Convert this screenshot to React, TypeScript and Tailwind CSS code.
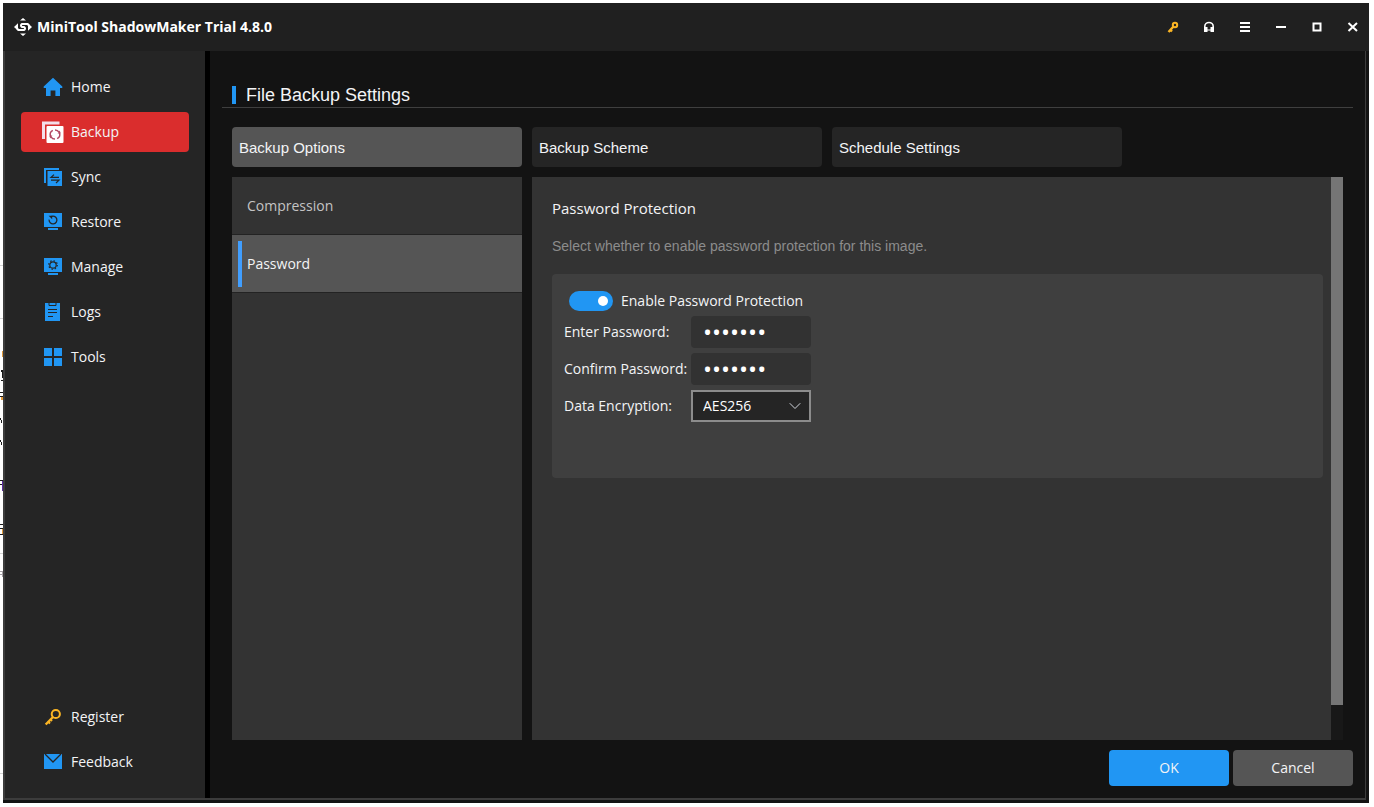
import React, { useState } from 'react';
import { ChevronDown } from 'lucide-react';

type IconName = 'home' | 'backup' | 'sync' | 'restore' | 'manage' | 'logs' | 'tools' | 'register' | 'feedback';

const BLUE = '#2196f3';
const DARK = '#252525';

const NavIcon: React.FC<{ name: IconName }> = ({ name }) => (
  <svg className="h-[22px] w-[22px] shrink-0" viewBox="0 0 22 22" fill="none" aria-hidden="true">
    {name === 'home' && (
      <path d="M11 1.8 1.7 10.6V12H4v8h4.6v-5.6h4.8V20H18v-8h2.3v-1.4z" fill={BLUE} />
    )}
    {name === 'backup' && (
      <>
        <path d="M1.500 18V2h16" stroke="#f3dfea" strokeWidth="3" />
        <rect x="4.5" y="5" width="17" height="17" rx="1" fill="#fff" />
        <path d="M8.600 15.400a4.800 4.800 0 0 1 2.200-6M17.400 11.600a4.800 4.800 0 0 1-2.200 6" stroke="#b34a64" strokeWidth="1.5" />
        <path d="M13 9a4.600 4.600 0 0 1 4 2.200M13 18a4.600 4.600 0 0 1-4-2.200" stroke="#b34a64" strokeWidth="1.5" />
        <path d="m15.600 12.400 3-.200-.800-2.600zM10.400 14.600l-3 .200.800 2.600z" fill="#b34a64" />
      </>
    )}
    {name === 'sync' && (
      <>
        <path d="M3 17V3h14" stroke={BLUE} strokeWidth="2" />
        <rect x="5.5" y="5" width="14.5" height="15" fill={BLUE} />
        <path d="M17 11.4H9l3-2.8M9 14.2h8l-3 2.8" stroke={DARK} strokeWidth="1.2" />
      </>
    )}
    {name === 'restore' && (
      <>
        <path d="M2 2h18v14H2zM6 17h10v2H6z" fill={BLUE} />
        <path d="M9 5.600a3.900 3.900 0 1 1-1.900 3" stroke={DARK} strokeWidth="1.3" />
        <path d="M6.6 4.8h3.6v3.4z" fill={DARK} />
      </>
    )}
    {name === 'manage' && (
      <>
        <path d="M2 2h18v14H2zM6 17h10v2H6z" fill={BLUE} />
        <circle cx="11" cy="9" r="3.2" stroke={DARK} strokeWidth="1.2" />
        <circle cx="11" cy="9" r="4.3" stroke={DARK} strokeWidth="1.2" strokeDasharray="1.4 1.98" />
      </>
    )}
    {name === 'logs' && (
      <>
        <path d="M3 2h15v18H3z" fill={BLUE} />
        <path d="M7 2v2.500h7V2" stroke={DARK} />
        <path d="M6 8.5h9M6 11.5h9M6 15.5h5" stroke={DARK} strokeWidth="1.2" />
      </>
    )}
    {name === 'tools' && <path d="M2 2h8v8H2zM12 2h8v8h-8zM2 12h8v8H2zM12 12h8v8h-8z" fill={BLUE} />}
    {name === 'register' && (
      <>
        <circle cx="13.8" cy="8" r="4.1" stroke="#fbb524" strokeWidth="2" />
        <path d="m11 11-7.300 7.500" stroke="#fbb524" strokeWidth="2.4" />
        <path d="m6 15.500 2 2M8.500 13.500l1.500 1.500" stroke="#fbb524" strokeWidth="2" />
      </>
    )}
    {name === 'feedback' && (
      <>
        <path d="M2 3h18v15H2z" fill={BLUE} />
        <path d="m3 3 8 8 8-8" stroke={DARK} strokeWidth="1.3" />
      </>
    )}
  </svg>
);

const mainNav: { icon: IconName; label: string }[] = [
  { icon: 'home', label: 'Home' },
  { icon: 'backup', label: 'Backup' },
  { icon: 'sync', label: 'Sync' },
  { icon: 'restore', label: 'Restore' },
  { icon: 'manage', label: 'Manage' },
  { icon: 'logs', label: 'Logs' },
  { icon: 'tools', label: 'Tools' },
];

const footerNav: { icon: IconName; label: string }[] = [
  { icon: 'register', label: 'Register' },
  { icon: 'feedback', label: 'Feedback' },
];

const tabs = ['Backup Options', 'Backup Scheme', 'Schedule Settings'];
const sections = ['Compression', 'Password'];

interface NavItemProps {
  icon: IconName;
  label: string;
  active?: boolean;
  onClick?: () => void;
}

const NavItem: React.FC<NavItemProps> = ({ icon, label, active, onClick }) => (
  <button
    type="button"
    onClick={onClick}
    className={`flex h-10 w-full items-center gap-[7px] rounded pl-[21px] text-sm text-gray-100 ${
      active ? 'bg-[#da2d2d]' : ''
    }`}
  >
    <NavIcon name={icon} />
    {label}
  </button>
);

const Logo = () => (
  <svg className="h-[18px] w-[18px] shrink-0" viewBox="0 0 18 18" aria-hidden="true">
    <path d="M9 0l3 2.600H6zM9 18l3-2.600H6z" fill="#fff" />
    <path d="M0 9l4-3.800v7.600zM18 9l-4-3.800v7.600z" fill="#fff" />
    <path
      d="M15 7.500 13.500 6H8a1.600 1.600 0 0 0 0 3h2a1.600 1.600 0 0 1 0 3H4.500L3 10.500"
      fill="none"
      stroke="#fff"
      strokeWidth="2"
    />
  </svg>
);

const titleActions = [
  {
    label: 'Register',
    icon: (
      <>
        <circle cx="8" cy="4" r="2.2" fill="none" stroke="#fbb524" strokeWidth="2" />
        <path d="M6.500 5.500 1.500 11M3 8.500l2 2" stroke="#fbb524" strokeWidth="2.4" />
      </>
    ),
  },
  {
    label: 'Support',
    icon: (
      <>
        <path d="M1.800 8V5.500a4.200 4 0 0 1 8.400 0V8" fill="none" stroke="#fff" strokeWidth="1.6" />
        <path d="M1 6h3.500v5H1zM7.500 6H11v5H7.500z" fill="#fff" />
        <path d="M4 9h4" stroke="#fff" />
      </>
    ),
  },
  { label: 'Menu', icon: <path d="M1 2h10M1 6h10M1 10h10" stroke="#fff" strokeWidth="2" /> },
  { label: 'Minimize', icon: <path d="M1 6h10" stroke="#fff" strokeWidth="2" /> },
  { label: 'Maximize', icon: <path d="M2.500 2.500h7v7h-7z" fill="none" stroke="#fff" strokeWidth="2" /> },
  { label: 'Close', icon: <path d="m1.500 2 8.500 8M10 2l-8.500 8" stroke="#fff" strokeWidth="2" /> },
];

const TitleBar = () => (
  <header className="flex h-12 shrink-0 items-center bg-[#202020] pl-[11px]">
    <Logo />
    <h1 className="ml-[5px] text-sm font-bold text-white">MiniTool ShadowMaker Trial 4.8.0</h1>
    <div className="ml-auto flex gap-1">
      {titleActions.map(({ label, icon }) => (
        <button key={label} type="button" aria-label={label} className="flex h-8 w-8 items-center justify-center">
          <svg className="h-3 w-3" viewBox="0 0 12 12">
            {icon}
          </svg>
        </button>
      ))}
    </div>
  </header>
);

interface PasswordFieldProps {
  id: string;
  label: string;
  value: string;
  onChange: (value: string) => void;
}

const PasswordField: React.FC<PasswordFieldProps> = ({ id, label, value, onChange }) => (
  <div className="flex items-center">
    <label htmlFor={id} className="w-[127px] shrink-0 whitespace-nowrap">
      {label}
    </label>
    <input
      id={id}
      type="password"
      value={value}
      onChange={(e) => onChange(e.target.value)}
      className="h-8 w-[120px] rounded bg-[#323232] px-3 text-2xl leading-8 text-white outline-none"
    />
  </div>
);

const PasswordPanel = () => {
  const [enabled, setEnabled] = useState(true);
  const [password, setPassword] = useState('abcdefg');
  const [confirm, setConfirm] = useState('abcdefg');
  const [encryption, setEncryption] = useState('AES256');

  return (
    <section className="flex min-w-0 flex-1 bg-[#333333]">
      <div className="min-w-0 flex-1 pt-[19px] pr-2 pl-5">
        <h3 className="text-[15px] leading-6 text-gray-100">Password Protection</h3>
        <p className="mt-4 font-['Liberation_Sans',Arial,sans-serif] text-sm leading-5 text-[#8c8c8c]">
          Select whether to enable password protection for this image.
        </p>
        <div className="mt-[18px] flex min-h-[204px] flex-col gap-[5px] rounded bg-[#3f3f3f] px-3 pt-[17px] text-sm text-gray-100">
          <label className="flex h-5 items-center gap-2 pl-[5px]">
            <input
              type="checkbox"
              role="switch"
              checked={enabled}
              onChange={(e) => setEnabled(e.target.checked)}
              className="flex h-5 w-11 appearance-none items-center rounded-full bg-gray-500 px-[5px] before:h-[10px] before:w-[10px] before:rounded-full before:bg-white before:content-[''] checked:justify-end checked:bg-[#2196f3]"
            />
            Enable Password Protection
          </label>
          <PasswordField id="password" label="Enter Password:" value={password} onChange={setPassword} />
          <PasswordField id="confirm" label="Confirm Password:" value={confirm} onChange={setConfirm} />
          <div className="flex items-center">
            <label htmlFor="encryption" className="w-[127px] shrink-0 whitespace-nowrap">
              Data Encryption:
            </label>
            <div className="relative">
              <select
                id="encryption"
                value={encryption}
                onChange={(e) => setEncryption(e.target.value)}
                className="h-8 w-[120px] appearance-none border-2 border-[#8c8c8c] bg-[#252525] px-[10px] text-sm text-white outline-none"
              >
                <option>AES256</option>
                <option>AES128</option>
                <option>None</option>
              </select>
              <ChevronDown
                className="pointer-events-none absolute top-1.5 right-1.5 h-5 w-5 text-gray-300"
                strokeWidth={1.2}
              />
            </div>
          </div>
        </div>
      </div>
      {/* Scrollbar track */}
      <div className="flex w-3 shrink-0 flex-col bg-[#181818] pb-[35px]">
        <div className="flex-1 bg-[#757575]" />
      </div>
    </section>
  );
};

// Edge of whatever document sits behind the window
const BackdropEdge = () => (
  <svg className="w-[3px] shrink-0" viewBox="0 0 3 800" preserveAspectRatio="xMinYMin slice" aria-hidden="true">
    <path d="M0 262.500h3M0 315.500h3M0 550.500h3M0 770.500h3" stroke="#d4d4d4" />
    <path d="M2 348h1v6H2zM1 394h2v3H1zM2 526h1v5H2z" fill="#e09a3c" />
    <path
      d="M1 367h2v2H1zM2 369h1v6H2zM1 377h2v1H1zM0 389h3v1H0zM0 393h3v1H0zM0 415h1v2H0zM1 417h1v3H1zM0 437h1v2H0zM1 439h1v3H1zM0 477h3v1H0zM0 481h3v1H0zM0 521h3v1H0zM0 525h3v1H0zM0 531h3v1H0z"
      fill="#1a1a1a"
    />
    <path d="M2 478h1v10H2z" fill="#5a2ca0" />
    <path d="M0 568h3v1H0zM0 571h3v1H0zM2 568h1v6H2z" fill="#a5a0a5" />
  </svg>
);

export default function App() {
  const [page, setPage] = useState('Backup');
  const [tab, setTab] = useState('Backup Options');
  const [section, setSection] = useState('Password');

  return (
    <div className="flex min-h-screen bg-white pt-[3px] pr-[5px] pb-1 font-['Open_Sans','Noto_Sans',sans-serif]">
      <BackdropEdge />
      <div className="flex min-w-0 flex-1 flex-col bg-[#131313] pb-[3px]">
        <TitleBar />
        <div className="mr-[3px] flex flex-1 border-r border-b-2 border-l-2 border-[#3c3c3c]">
          <nav className="flex w-[200px] shrink-0 flex-col justify-between bg-[#252525] px-4 py-4">
            <div className="flex flex-col gap-[5px]">
              {mainNav.map((item) => (
                <NavItem key={item.label} {...item} active={page === item.label} onClick={() => setPage(item.label)} />
              ))}
            </div>
            <div className="flex flex-col gap-[5px]">
              {footerNav.map((item) => (
                <NavItem key={item.label} {...item} />
              ))}
            </div>
          </nav>

          <main className="flex min-w-0 flex-1 flex-col border-l-[5px] border-black bg-[#131313] px-3 pt-8 pb-3">
            <div className="flex h-[25px] items-center border-b border-[#3f3f3f] pl-[10px]">
              <div className="h-[18px] w-1 bg-[#2196f3]" />
              <h2 className="ml-[10px] font-['Liberation_Sans',Arial,sans-serif] text-lg leading-6 text-gray-100">
                File Backup Settings
              </h2>
            </div>

            <div className="mt-[19px] flex gap-[10px] px-[10px] font-['Liberation_Sans',Arial,sans-serif]">
              {tabs.map((name) => (
                <button
                  key={name}
                  type="button"
                  onClick={() => setTab(name)}
                  className={`h-10 w-[290px] rounded px-[7px] pt-0.5 text-left text-[15px] text-gray-100 ${
                    tab === name ? 'bg-[#555555]' : 'bg-[#252525]'
                  }`}
                >
                  {name}
                </button>
              ))}
            </div>

            <div className="mt-[10px] flex flex-1 gap-[10px] px-[10px]">
              <div className="w-[290px] shrink-0 bg-[#333333]">
                {sections.map((name) => (
                  <button
                    key={name}
                    type="button"
                    onClick={() => setSection(name)}
                    className={`flex h-[58px] w-full items-center gap-[5px] border-b border-[#232323] px-1.5 text-sm ${
                      section === name ? 'bg-[#555555] text-gray-100' : 'text-[#c4c4c4]'
                    }`}
                  >
                    <span className={`h-[46px] w-1 ${section === name ? 'bg-[#409eff]' : ''}`} />
                    {name}
                  </button>
                ))}
              </div>
              <PasswordPanel />
            </div>

            <div className="mt-[10px] flex justify-end gap-1 text-sm text-gray-100">
              <button type="button" className="h-9 w-[120px] rounded bg-[#2196f3]">
                OK
              </button>
              <button type="button" className="h-9 w-[120px] rounded bg-[#555555]">
                Cancel
              </button>
            </div>
          </main>
        </div>
      </div>
    </div>
  );
}
